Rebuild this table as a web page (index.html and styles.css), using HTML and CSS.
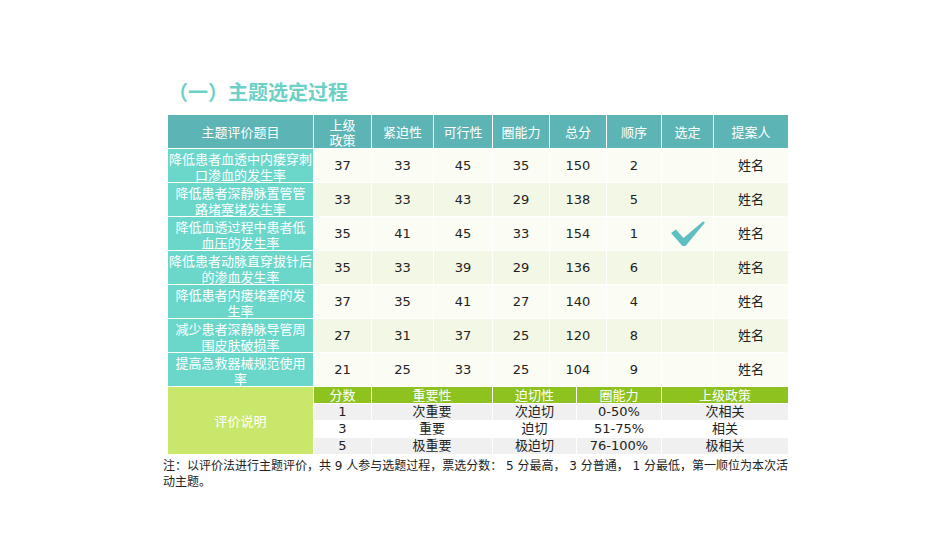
FILE: index.html
```html
<!DOCTYPE html>
<html lang="zh">
<head>
<meta charset="utf-8">
<link rel="stylesheet" href="styles.css">
</head>
<body>
<div class="page">
  <h1 class="title">（一）主题选定过程</h1>
  <div class="main">
    <div class="hd">主题评价题目</div>
    <div class="hd">上级<br>政策</div>
    <div class="hd">紧迫性</div>
    <div class="hd">可行性</div>
    <div class="hd">圈能力</div>
    <div class="hd">总分</div>
    <div class="hd">顺序</div>
    <div class="hd">选定</div>
    <div class="hd">提案人</div>

    <div class="topic">降低患者血透中内瘘穿刺<br>口渗血的发生率</div>
    <div class="c odd">37</div><div class="c odd">33</div><div class="c odd">45</div><div class="c odd">35</div><div class="c odd">150</div><div class="c odd">2</div><div class="c odd"></div><div class="c odd">姓名</div>

    <div class="topic">降低患者深静脉置管管<br>路堵塞堵发生率</div>
    <div class="c even">33</div><div class="c even">33</div><div class="c even">43</div><div class="c even">29</div><div class="c even">138</div><div class="c even">5</div><div class="c even"></div><div class="c even">姓名</div>

    <div class="topic">降低血透过程中患者低<br>血压的发生率</div>
    <div class="c odd">35</div><div class="c odd">41</div><div class="c odd">45</div><div class="c odd">33</div><div class="c odd">154</div><div class="c odd">1</div>
    <div class="c odd"><svg class="check" width="34" height="26" viewBox="0 0 34 26"><polygon points="0,12 5,8.5 12.5,17 32,0.5 34,1.5 14.5,25 11.5,25"/></svg></div>
    <div class="c odd">姓名</div>

    <div class="topic">降低患者动脉直穿拔针后<br>的渗血发生率</div>
    <div class="c even">35</div><div class="c even">33</div><div class="c even">39</div><div class="c even">29</div><div class="c even">136</div><div class="c even">6</div><div class="c even"></div><div class="c even">姓名</div>

    <div class="topic">降低患者内瘘堵塞的发<br>生率</div>
    <div class="c odd">37</div><div class="c odd">35</div><div class="c odd">41</div><div class="c odd">27</div><div class="c odd">140</div><div class="c odd">4</div><div class="c odd"></div><div class="c odd">姓名</div>

    <div class="topic">减少患者深静脉导管周<br>围皮肤破损率</div>
    <div class="c even">27</div><div class="c even">31</div><div class="c even">37</div><div class="c even">25</div><div class="c even">120</div><div class="c even">8</div><div class="c even"></div><div class="c even">姓名</div>

    <div class="topic">提高急救器械规范使用<br>率</div>
    <div class="c odd">21</div><div class="c odd">25</div><div class="c odd">33</div><div class="c odd">25</div><div class="c odd">104</div><div class="c odd">9</div><div class="c odd"></div><div class="c odd">姓名</div>
  </div>

  <div class="legend">
    <div class="label">评价说明</div>
    <div class="lh">分数</div><div class="lh">重要性</div><div class="lh">迫切性</div><div class="lh">圈能力</div><div class="lh">上级政策</div>
    <div class="lc gray">1</div><div class="lc gray">次重要</div><div class="lc gray">次迫切</div><div class="lc gray">0-50%</div><div class="lc gray">次相关</div>
    <div class="lc">3</div><div class="lc">重要</div><div class="lc">迫切</div><div class="lc">51-75%</div><div class="lc">相关</div>
    <div class="lc gray">5</div><div class="lc gray">极重要</div><div class="lc gray">极迫切</div><div class="lc gray">76-100%</div><div class="lc gray">极相关</div>
  </div>

  <p class="note">注：以评价法进行主题评价，共 9 人参与选题过程，票选分数： 5 分最高， 3 分普通， 1 分最低，第一顺位为本次活动主题。</p>
</div>
</body>
</html>
```

FILE: styles.css
```css
html, body {
  margin: 0;
  padding: 0;
  background: #ffffff;
}

body {
  font-family: "DejaVu Sans", "Noto Sans CJK SC", sans-serif;
  color: #222222;
}

.page {
  padding: 80px 0 0 163px;
}

.title {
  margin: 0 0 11px 5px;
  font-family: "Noto Sans CJK SC", sans-serif;
  font-size: 20px;
  line-height: 24px;
  font-weight: 700;
  color: #6dd0c6;
}

.main {
  margin-left: 5px;
  width: 620px;
  display: grid;
  grid-template-columns: 145px 57px 61px 58px 56px 56px 54px 51px 74px;
  grid-template-rows: repeat(8, 33px);
  gap: 1px;
  background: #ffffff;
}

.main > div {
  display: flex;
  align-items: center;
  justify-content: center;
  text-align: center;
  font-size: 13px;
}

.hd {
  background: #5cb4b4;
  color: #ffffff;
  font-family: "Noto Sans CJK SC", sans-serif;
  line-height: 15px;
}

.topic {
  background: #6bd7cb;
  color: #ffffff;
  font-family: "Noto Sans CJK SC", sans-serif;
  line-height: 16px;
  white-space: nowrap;
  padding: 2px 0 0;
  box-sizing: border-box;
}

.c {
  line-height: 16px;
}

.odd {
  background: #fbfcf3;
}

.even {
  background: #f3f8e6;
}

.check {
  display: block;
  fill: #5dbfbf;
}

.legend {
  margin: 1px 0 0 5px;
  width: 620px;
  display: grid;
  grid-template-columns: 145px 57px 120px 83px 84px 126px;
  grid-template-rows: repeat(4, 16px);
  gap: 1px;
}

.legend > div {
  display: flex;
  align-items: center;
  justify-content: center;
  font-size: 13px;
  line-height: 16px;
}

.label {
  grid-row: 1 / span 4;
  background: #c9e76b;
  color: #ffffff;
  font-family: "Noto Sans CJK SC", sans-serif;
}

.lh {
  background: #8dc21f;
  color: #ffffff;
  font-family: "Noto Sans CJK SC", sans-serif;
}

.lc {
  background: #ffffff;
}

.lc.gray {
  background: #f0f0f0;
}

.note {
  margin: 4px 0 0 0;
  width: 630px;
  font-size: 12px;
  line-height: 16px;
  color: #222222;
}
```
